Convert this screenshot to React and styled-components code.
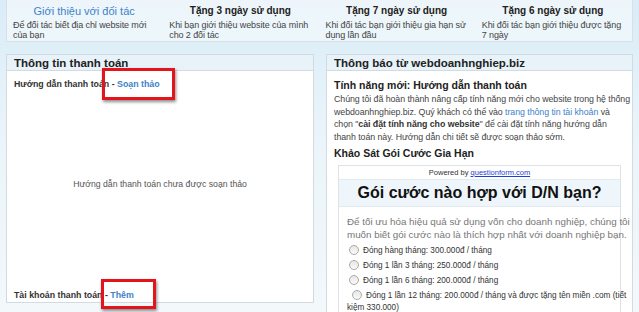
import styled, { createGlobalStyle } from "styled-components";

const Global = createGlobalStyle`
  html, body {
    margin: 0;
    padding: 0;
  }
  body {
    width: 639px;
    height: 312px;
    overflow: hidden;
    font-family: "Liberation Sans", Arial, sans-serif;
    background: linear-gradient(180deg, #d9ecf7 0%, #e9f4fa 40%, #f3f8fb 100%);
  }
`;

const Page = styled.div`
  padding: 0 6px;
  width: 627px;
`;

const TopBox = styled.div`
  display: grid;
  grid-template-columns: repeat(4, 1fr);
  height: 41px;
  background: rgba(240, 247, 251, 0.85);
  border: 1px solid #d7e1e7;
  border-top: none;
`;

const Feature = styled.div`
  padding: 5px 8px 0 6px;
  font-size: 9px;
  letter-spacing: -0.1px;
  color: #444;
  line-height: 10px;
`;

const FeatureTitle = styled.div`
  text-align: center;
  font-size: ${(p) => (p.$active ? 11 : 10)}px;
  letter-spacing: 0;
  font-weight: ${(p) => (p.$active ? "normal" : "bold")};
  color: ${(p) => (p.$active ? "#3d82c9" : "#222")};
  margin-bottom: 3px;
  line-height: 12px;
`;

const Columns = styled.div`
  display: flex;
  gap: 12px;
  margin-top: 12px;
`;

const Panel = styled.div`
  position: relative;
  background: #fff;
  border: 1px solid #d3dbe0;
  width: ${(p) => p.$w}px;
  height: ${(p) => p.$h}px;
  display: flex;
  flex-direction: column;
`;

const PanelHead = styled.div`
  height: 14px;
  padding: 1px 7px 0 7px;
  background: #e7f2f9;
  border-bottom: 1px solid #d3dbe0;
  font-size: 11.5px;
  font-weight: bold;
  color: #222;
  line-height: 14px;
`;

const PanelBody = styled.div`
  flex: 1;
  display: flex;
  flex-direction: column;
  padding: 8px 7px 2px 7px;
`;

const Label = styled.div`
  font-size: 8.8px;
  font-weight: bold;
  color: #333;
  position: relative;
`;

const Link = styled.span`
  color: #3d82c9;
  font-weight: bold;
`;

const Empty = styled.div`
  flex: 1;
  display: flex;
  align-items: center;
  justify-content: center;
  font-size: 8.7px;
  color: #555;
  padding-bottom: 12px;
`;

const Marker = styled.span`
  position: absolute;
  left: ${(p) => p.$x}px;
  top: ${(p) => p.$y}px;
  width: ${(p) => p.$w}px;
  height: ${(p) => p.$h}px;
  border: 3px solid #e3141b;
  box-shadow: 1px 2px 3px rgba(0, 0, 0, 0.45);
  box-sizing: border-box;
`;

const NewsTitle = styled.div`
  font-size: 10.5px;
  font-weight: bold;
  color: #222;
  margin-bottom: 2px;
`;

const Para = styled.p`
  margin: 0 0 4px 0;
  font-size: 8.8px;
  letter-spacing: -0.05px;
  line-height: 12.5px;
  color: #444;
  white-space: nowrap;
  a {
    color: #3d82c9;
    text-decoration: none;
  }
  b {
    color: #333;
  }
`;

const Survey = styled.div`
  margin: 4px 4px 0 4px;
  border: 1px solid #dde3e7;
  border-bottom: none;
  flex: 1;
`;

const Powered = styled.div`
  text-align: center;
  font-size: 7.5px;
  color: #333;
  padding: 2px 0 2px 0;
  a {
    color: #1a3fd6;
    text-decoration: underline;
  }
`;

const SurveyTitle = styled.div`
  background: #eef6fb;
  border-top: 1px solid #e3eaee;
  border-bottom: 1px solid #e3eaee;
  text-align: center;
  font-size: 16px;
  font-weight: bold;
  color: #111;
  height: 26px;
  line-height: 26px;
`;

const Question = styled.div`
  padding: 9px 4px 4px 8px;
  font-size: 9.8px;
  line-height: 12.5px;
  color: #777;
  white-space: nowrap;
`;

const Options = styled.div`
  display: flex;
  flex-direction: column;
  gap: 3px;
  padding: 0 0 0 8px;
`;

const Option = styled.div`
  font-size: 8.2px;
  color: #333;
  line-height: 12px;
  white-space: nowrap;
  padding-left: ${(p) => (p.$wrap ? 0 : 2)}px;
`;

const Radio = styled.span`
  display: inline-block;
  width: 8px;
  height: 8px;
  border-radius: 50%;
  border: 1px solid #aaa;
  background: linear-gradient(180deg, #e6e6e6, #fafafa);
  vertical-align: -2px;
  margin: 0 4px 0 ${(p) => (p.$wrap ? 5 : 0)}px;
`;

const features = [
  { title: "Giới thiệu với đối tác", desc: "Để đối tác biết địa chỉ website mới của bạn", active: true },
  { title: "Tặng 3 ngày sử dụng", desc: "Khi bạn giới thiệu website của mình cho 2 đối tác" },
  { title: "Tặng 7 ngày sử dụng", desc: "Khi đối tác bạn giới thiệu gia hạn sử dụng lần đầu" },
  { title: "Tặng 6 ngày sử dụng", desc: "Khi đối tác bạn giới thiệu được tặng 7 ngày" },
];

const options = [
  ["Đóng hàng tháng: 300.000đ / tháng"],
  ["Đóng 1 lần 3 tháng: 250.000đ / tháng"],
  ["Đóng 1 lần 6 tháng: 200.000đ / tháng"],
  ["Đóng 1 lần 12 tháng: 200.000đ / tháng và được tặng tên miền .com (tiết", "kiệm 330.000)"],
];

export default function App() {
  return (
    <>
      <Global />
      <Page>
        <TopBox>
          {features.map((f) => (
            <Feature key={f.title}>
              <FeatureTitle $active={f.active}>{f.title}</FeatureTitle>
              {f.desc}
            </Feature>
          ))}
        </TopBox>

        <Columns>
          <Panel $w={306} $h={247}>
            <PanelHead>Thông tin thanh toán</PanelHead>
            <PanelBody>
              <Label>
                Hướng dẫn thanh toán - <Link>Soạn thảo</Link>
                <Marker $x={88} $y={-11} $w={73} $h={32} />
              </Label>
              <Empty>Hướng dẫn thanh toán chưa được soạn thảo</Empty>
              <Label>
                Tài khoản thanh toán - <Link>Thêm</Link>
                <Marker $x={87} $y={-11} $w={55} $h={30} />
              </Label>
            </PanelBody>
          </Panel>

          <Panel $w={305} $h={260}>
            <PanelHead>Thông báo từ webdoanhnghiep.biz</PanelHead>
            <PanelBody>
              <NewsTitle>Tính năng mới: Hướng dẫn thanh toán</NewsTitle>
              <Para>
                Chúng tôi đã hoàn thành nâng cấp tính năng mới cho website trong hệ thống
                <br />
                webdoanhnghiep.biz. Quý khách có thể vào <a href="#">trang thông tin tài khoản</a>{" "}
                và
                <br />
                chọn "<b>cài đặt tính năng cho website</b>" để cài đặt tính năng hướng dẫn
                <br />
                thanh toán này. Hướng dẫn chi tiết sẽ được soạn thảo sớm.
              </Para>
              <NewsTitle>Khảo Sát Gói Cước Gia Hạn</NewsTitle>
              <Survey>
                <Powered>
                  Powered by <a href="#">questionform.com</a>
                </Powered>
                <SurveyTitle>Gói cước nào hợp với D/N bạn?</SurveyTitle>
                <Question>
                  Để tối ưu hóa hiệu quả sử dụng vốn cho doanh nghiệp, chúng tôi
                  <br />
                  muốn biết gói cước nào là thích hợp nhất với doanh nghiệp bạn.
                </Question>
                <Options>
                  {options.map((lines, i) => (
                    <Option key={lines[0]} $wrap={lines.length > 1}>
                      <Radio $wrap={lines.length > 1} />
                      {lines[0]}
                      {lines[1] && (
                        <>
                          <br />
                          {lines[1]}
                        </>
                      )}
                    </Option>
                  ))}
                </Options>
              </Survey>
            </PanelBody>
          </Panel>
        </Columns>
      </Page>
    </>
  );
}
